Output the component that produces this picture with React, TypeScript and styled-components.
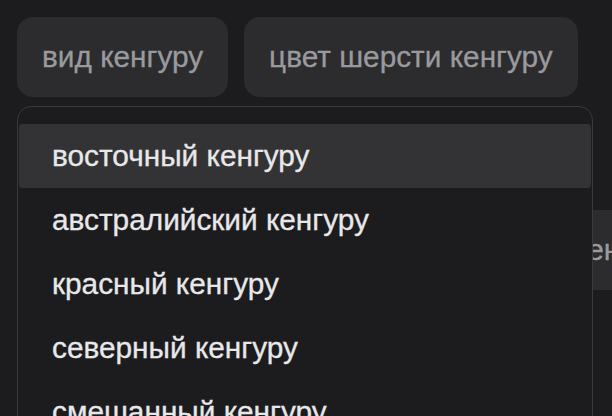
import React, { useState } from 'react';
import styled, { createGlobalStyle } from 'styled-components';

const GlobalStyle = createGlobalStyle`
  html, body {
    margin: 0;
    padding: 0;
    background: #1c1c1e;
    font-family: "Liberation Sans", Arial, sans-serif;
    overflow: hidden;
  }
`;

const Page = styled.div`
  position: relative;
  padding: 17px;
  height: 416px;
  box-sizing: border-box;
`;

const ChipRow = styled.div<{ $offset?: number; $gap?: number }>`
  display: flex;
  gap: ${(p) => p.$gap ?? 16}px;
  margin-top: ${(p) => p.$offset ?? 0}px;
`;

const Chip = styled.button`
  flex: none;
  height: 80px;
  padding: 0 25px;
  border: none;
  border-radius: 16px;
  background: #2c2c2e;
  color: #9a9a9e;
  font-family: inherit;
  font-size: 29.8px;
  -webkit-text-stroke: 0.3px #9a9a9e;
  white-space: nowrap;
  cursor: pointer;
`;

const Menu = styled.ul`
  position: absolute;
  top: 106px;
  left: 17px;
  width: 576px;
  height: 340px;
  margin: 0;
  padding: 17px 1px 0;
  box-sizing: border-box;
  list-style: none;
  background: #1c1c1e;
  border: 1px solid #3a3a3c;
  border-radius: 14px;
`;

const MenuItem = styled.li<{ $active?: boolean }>`
  height: 64px;
  display: flex;
  align-items: center;
  padding-left: 33px;
  font-size: 29.8px;
  color: #e8e8ea;
  -webkit-text-stroke: 0.3px #e8e8ea;
  border-radius: 4px;
  background: ${(p) => (p.$active ? '#333335' : 'transparent')};
  cursor: pointer;
`;

const kinds = [
  'восточный кенгуру',
  'австралийский кенгуру',
  'красный кенгуру',
  'северный кенгуру',
  'смешанный кенгуру',
];

export default function App() {
  const [active, setActive] = useState(0);

  return (
    <>
      <GlobalStyle />
      <Page>
        <ChipRow>
          <Chip>вид кенгуру</Chip>
          <Chip>цвет шерсти кенгуру</Chip>
        </ChipRow>
        <ChipRow $offset={113} $gap={31}>
          <Chip>питание кенгуру</Chip>
          <Chip>среда обитания кенгуру</Chip>
        </ChipRow>
        <Menu>
          {kinds.map((k, i) => (
            <MenuItem key={k} $active={i === active} onMouseEnter={() => setActive(i)}>
              {k}
            </MenuItem>
          ))}
        </Menu>
      </Page>
    </>
  );
}
